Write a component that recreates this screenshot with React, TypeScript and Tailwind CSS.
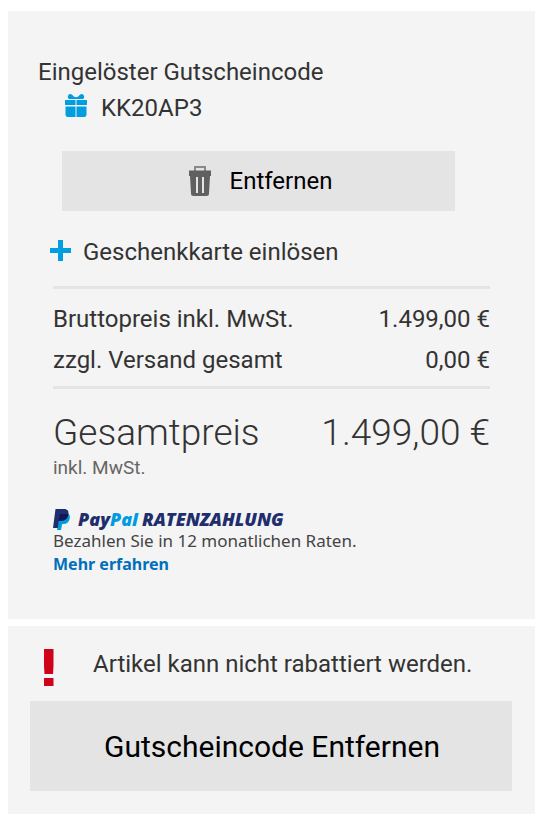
import type { ReactNode } from 'react'

function GiftIcon() {
  return (
    <svg className="mb-[5px] w-[22px] h-[23px]" viewBox="0 0 22 23" fill="none" aria-hidden="true">
      <path
        d="M5.500 0c2 0 2.500 3.200 5.500 3.200S14.500 0 16.500 0C18 0 19.200 1.200 19.200 2.800c0 1-.4 1.800-1.200 2.200H4C3.200 4.600 2.800 3.800 2.800 2.800 2.800 1.200 4 0 5.500 0z"
        fill="#009ee0"
      />
      <path d="M0 6h10.500v5H0zM11.500 6H22v5H11.500z" fill="#009ee0" />
      <path d="M.5 12.500h10V23H3a2.500 2.500 0 0 1-2.500-2.500zM11.500 12.500h10v8A2.500 2.500 0 0 1 19 23h-7.500z" fill="#009ee0" />
    </svg>
  )
}

function TrashIcon() {
  return (
    <svg className="w-[22px] h-[30px]" viewBox="0 0 22 30" aria-hidden="true">
      <path d="M6 5V1h10v4" fill="none" stroke="#888" strokeWidth="2" />
      <path d="M0 4.500h22V10h-1l-1 17.500a2.500 2.500 0 0 1-2.500 2.500h-13A2.500 2.500 0 0 1 2 27.500L1 10H0z" fill="#606060" />
      <path d="M7 11h2v16H7zM13 11h2v16h-2z" fill="#e4e4e4" />
    </svg>
  )
}

function PlusIcon() {
  return (
    <svg className="mb-[3px] w-[21px] h-[21px]" viewBox="0 0 21 21" aria-hidden="true">
      <path d="M8 0h5v8h8v5h-8v8H8v-8H0V8h8z" fill="#009ee0" />
    </svg>
  )
}

function AlertIcon() {
  return (
    <svg className="w-[10px] h-[37px]" viewBox="0 0 10 37" aria-hidden="true">
      <path d="M0 0h9.500v17l-.5 8H.5L0 17zM0 29h9.500v8H0z" fill="#d0021b" />
    </svg>
  )
}

function PayPalMark() {
  return (
    <svg className="w-[17px] h-[21px]" viewBox="0 0 17 21" aria-hidden="true">
      <path d="M7 5h8.500c1.300 1 1.700 2.600 1.200 4.700-.7 3.600-3 5.300-6.400 5.300H9.200L8 21H4z" fill="#009cde" />
      <path d="M2.500 0h8.500c3.600 0 5.100 2.200 4.400 5.700-.8 4-3.400 6-7.200 6H6L4.800 19H0z" fill="#1f2f6e" />
      <path d="M6.800 5h8.700c-.9 4.500-3.500 6.700-7.300 6.700H5.900z" fill="#10175a" />
    </svg>
  )
}

function PriceRow({ label, children }: { label: string; children: ReactNode }) {
  return (
    <div className="flex justify-between leading-[41px]">
      <dt>{label}</dt>
      <dd>{children}</dd>
    </div>
  )
}

export default function App() {
  return (
    <main className="bg-white px-2 pt-[11px] pb-[5px] font-['Roboto',sans-serif] text-2xl leading-9 text-[#333]">
      <section className="bg-[#f4f4f4] pt-[43px] pb-[43px]">
        <div className="pl-[30px]">
          <h2>Eingelöster Gutscheincode</h2>
          <p className="flex items-center gap-[14px] pl-[27px]">
            <GiftIcon />
            KK20AP3
          </p>
        </div>

        <button
          type="button"
          className="mt-[25px] ml-[54px] mr-20 flex h-[60px] w-[393px] items-center justify-center gap-[19px] bg-[#e4e4e4] pl-1 text-black"
        >
          <TrashIcon />
          Entfernen
        </button>

        <button type="button" className="mt-[23px] ml-[42px] flex items-center gap-3">
          <PlusIcon />
          Geschenkkarte einlösen
        </button>

        <div className="mt-4 mx-[45px]">
          <dl className="border-y-[3px] border-[#e4e4e4] pt-[10px] pb-[5px]">
            <PriceRow label="Bruttopreis inkl. MwSt.">1.499,00 €</PriceRow>
            <PriceRow label="zzgl. Versand gesamt">0,00 €</PriceRow>
          </dl>

          <div className="mt-[21px] flex justify-between text-[37px] leading-[46px] font-light">
            <span>Gesamtpreis</span>
            <span>1.499,00 €</span>
          </div>
          <p className="text-[19px] leading-6 text-[#666]">inkl. MwSt.</p>

          <div className="mt-[29px] font-['Noto_Sans',sans-serif]">
            <div className="flex h-5 items-center text-lg leading-5 font-extrabold italic text-[#1f2f6e] font-['Open_Sans',sans-serif]">
              <PayPalMark />
              <span className="ml-2">Pay</span>
              <span className="text-[#009cde]">Pal</span>
              <span className="ml-1">RATENZAHLUNG</span>
            </div>
            <p className="text-[17px] leading-[23px] text-[#444]">Bezahlen Sie in 12 monatlichen Raten.</p>
            <a href="#" className="block text-base leading-6 font-bold text-[#0070ba]">
              Mehr erfahren
            </a>
          </div>
        </div>
      </section>

      <section className="mt-[7px] bg-[#f4f4f4] pl-[22px] pr-[23px] pt-5 pb-[23px]">
        <div className="flex gap-[39px] pl-[14px]">
          <div className="pt-[3px]">
            <AlertIcon />
          </div>
          <p>Artikel kann nicht rabattiert werden.</p>
        </div>
        <button type="button" className="mt-[15px] h-[90px] w-full bg-[#e4e4e4] pt-0.5 pl-0.5 text-3xl text-black">
          Gutscheincode Entfernen
        </button>
      </section>
    </main>
  )
}
